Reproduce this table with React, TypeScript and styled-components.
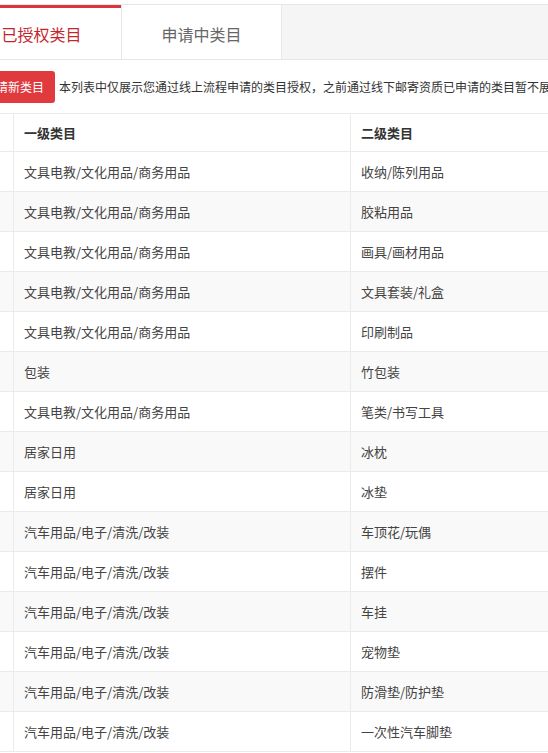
import React from "react";
import styled, { createGlobalStyle } from "styled-components";

const Global = createGlobalStyle`
  html, body { margin: 0; padding: 0; background: #fff; overflow: hidden; }
  body { font-family: "Noto Sans CJK SC", "Noto Sans", sans-serif; }
`;

const Page = styled.div`
  margin-left: -38px;
  padding-top: 4px;
  width: 1100px;
`;

const TabBar = styled.div`
  display: flex;
  background: #f5f5f5;
  border-top: 1px solid #e6e6e6;
  border-bottom: 1px solid #e6e6e6;
  height: 54px;
`;

const Tab = styled.div<{ $active?: boolean }>`
  width: 160px;
  box-sizing: border-box;
  display: flex;
  align-items: center;
  justify-content: center;
  padding-top: 4px;
  background: #fff;
  border-right: 1px solid #e8e8e8;
  font-size: 16px;
  color: ${(p) => (p.$active ? "#c4262e" : "#666")};
  box-shadow: ${(p) => (p.$active ? "inset 0 3px 0 #d9353b" : "none")};
`;

const ActionRow = styled.div`
  display: flex;
  align-items: center;
  gap: 4px;
  padding: 11px 11px 0;
  height: 32px;
`;

const Button = styled.button`
  height: 32px;
  padding: 0 11px;
  border: none;
  border-radius: 3px;
  background: #e0393e;
  color: #fff;
  font-family: inherit;
  font-size: 12px;
  line-height: 32px;
`;

const Notice = styled.span`
  font-size: 12px;
  line-height: 16px;
  color: #333;
  white-space: nowrap;
`;

const Table = styled.div`
  margin: 10px 0 0 11px;
  width: 1000px;
  border-top: 1px solid #ebebeb;
  border-left: 1px solid #ebebeb;
`;

const Row = styled.div<{ $striped?: boolean; $head?: boolean }>`
  display: grid;
  grid-template-columns: 40px 337px 1fr;
  height: ${(p) => (p.$head ? "38px" : "40px")};
  box-sizing: border-box;
  border-bottom: 1px solid #ebebeb;
  background: ${(p) => (p.$striped ? "#f9f9f9" : "#fff")};
`;

const Cell = styled.div<{ $head?: boolean }>`
  display: flex;
  align-items: center;
  padding: 0 10px;
  border-right: 1px solid #ebebeb;
  font-size: 13px;
  font-weight: ${(p) => (p.$head ? "bold" : "normal")};
  color: ${(p) => (p.$head ? "#333" : "#444")};
  white-space: nowrap;
  overflow: hidden;
`;

const rows: [string, string][] = [
  ["文具电教/文化用品/商务用品", "收纳/陈列用品"],
  ["文具电教/文化用品/商务用品", "胶粘用品"],
  ["文具电教/文化用品/商务用品", "画具/画材用品"],
  ["文具电教/文化用品/商务用品", "文具套装/礼盒"],
  ["文具电教/文化用品/商务用品", "印刷制品"],
  ["包装", "竹包装"],
  ["文具电教/文化用品/商务用品", "笔类/书写工具"],
  ["居家日用", "冰枕"],
  ["居家日用", "冰垫"],
  ["汽车用品/电子/清洗/改装", "车顶花/玩偶"],
  ["汽车用品/电子/清洗/改装", "摆件"],
  ["汽车用品/电子/清洗/改装", "车挂"],
  ["汽车用品/电子/清洗/改装", "宠物垫"],
  ["汽车用品/电子/清洗/改装", "防滑垫/防护垫"],
  ["汽车用品/电子/清洗/改装", "一次性汽车脚垫"],
];

export default function App() {
  return (
    <>
      <Global />
      <Page>
        <TabBar>
          <Tab $active>已授权类目</Tab>
          <Tab>申请中类目</Tab>
        </TabBar>
        <ActionRow>
          <Button>申请新类目</Button>
          <Notice>
            本列表中仅展示您通过线上流程申请的类目授权，之前通过线下邮寄资质已申请的类目暂不展示
          </Notice>
        </ActionRow>
        <Table>
          <Row $head>
            <Cell $head />
            <Cell $head>一级类目</Cell>
            <Cell $head>二级类目</Cell>
          </Row>
          {rows.map(([a, b], i) => (
            <Row key={i} $striped={i % 2 === 1}>
              <Cell />
              <Cell>{a}</Cell>
              <Cell>{b}</Cell>
            </Row>
          ))}
        </Table>
      </Page>
    </>
  );
}
